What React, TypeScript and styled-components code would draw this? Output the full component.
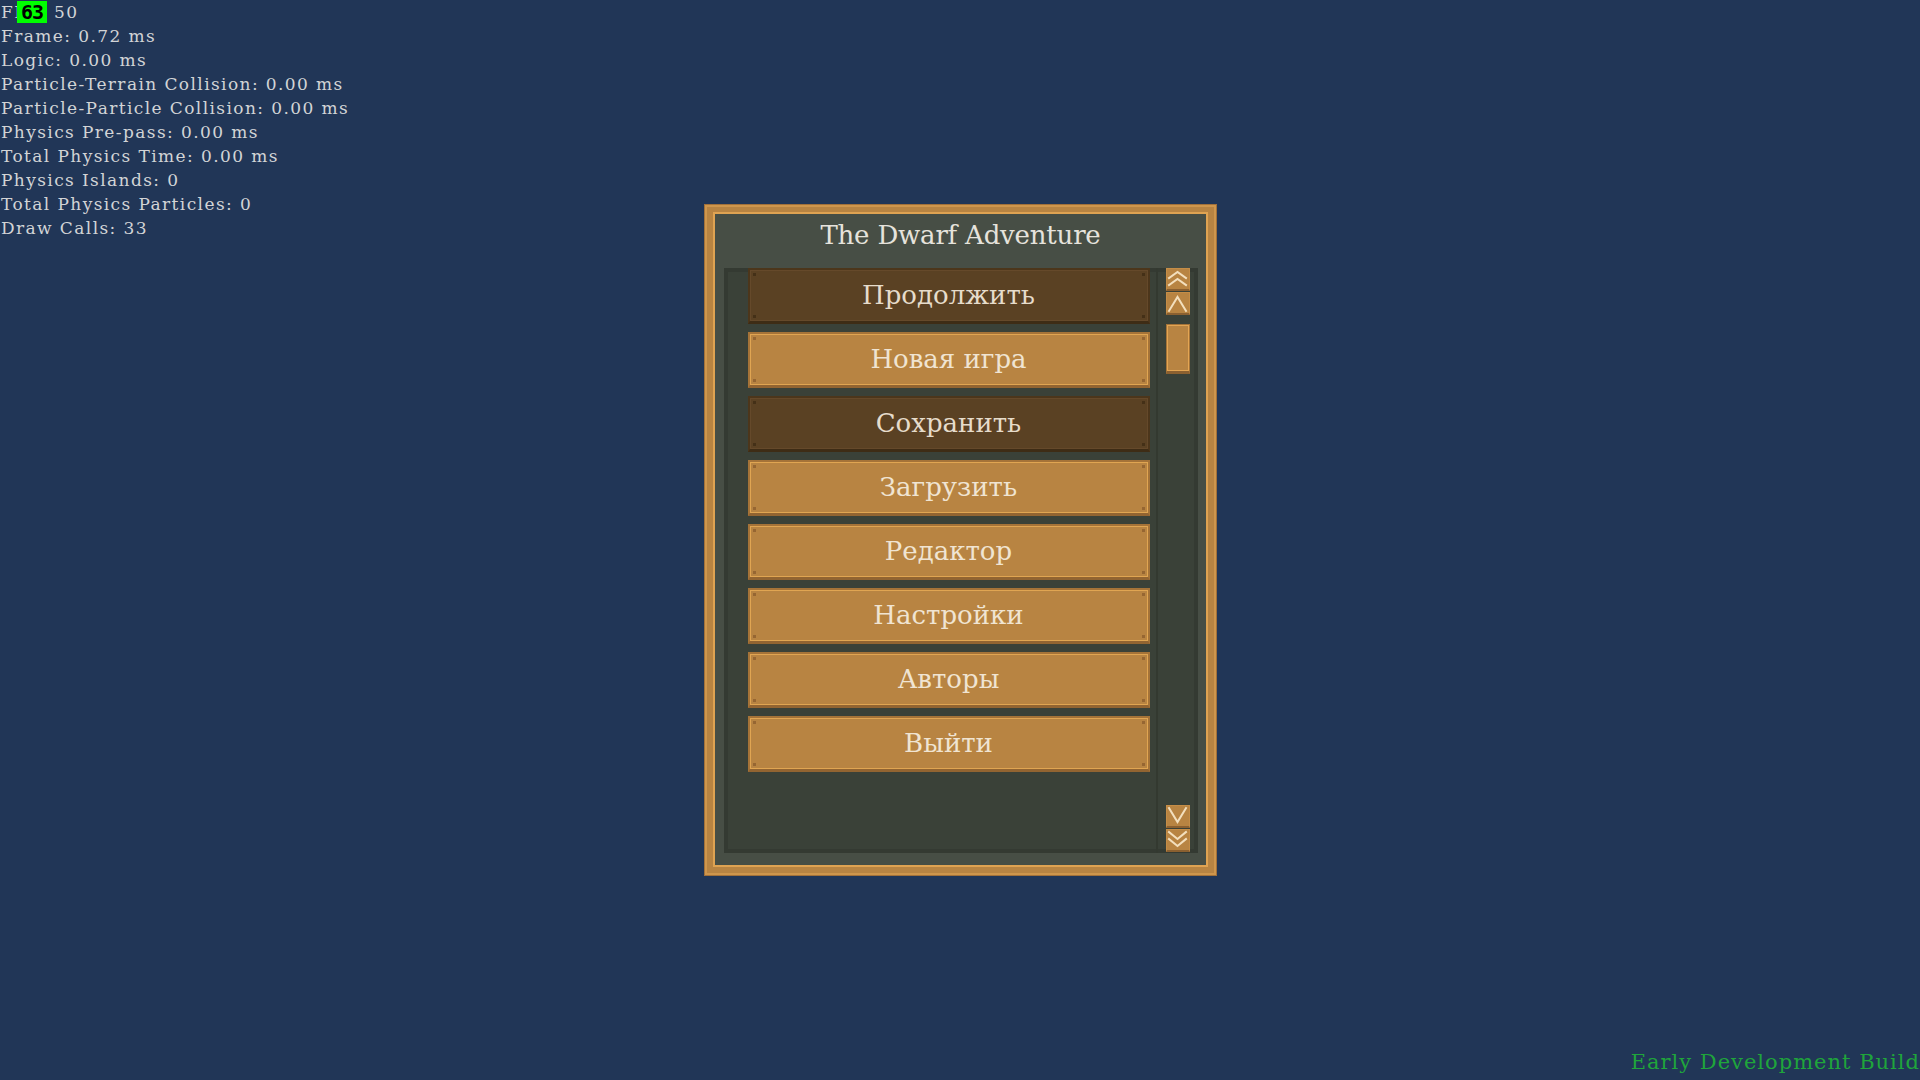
import React from "react";
import styled, { createGlobalStyle, css } from "styled-components";

const GlobalStyle = createGlobalStyle`
  html, body {
    margin: 0;
    padding: 0;
    background: #213657;
  }
  body {
    font-family: "DejaVu Serif", "Liberation Serif", serif;
  }
`;

const Screen = styled.div`
  position: relative;
  width: 100vw;
  height: 100vh;
  overflow: hidden;
  display: flex;
  align-items: center;
  justify-content: center;
  background: #213657;
`;

const Hud = styled.div`
  position: absolute;
  top: 0;
  left: 1px;
  display: flex;
  flex-direction: column;
  font-size: 17px;
  line-height: 24px;
  letter-spacing: 1.4px;
  color: #d2d4d6;
  white-space: nowrap;
`;

const HudLine = styled.div`
  position: relative;
`;

const FpsBadge = styled.span`
  position: absolute;
  left: 16px;
  top: 1px;
  width: 30px;
  height: 22px;
  background: #00ff00;
  color: #000;
  font-family: "DejaVu Sans Mono", monospace;
  font-weight: bold;
  font-size: 20px;
  line-height: 22px;
  text-align: center;
  letter-spacing: -1px;
`;

const BuildLabel = styled.div`
  position: absolute;
  right: 0;
  bottom: 4px;
  font-size: 21px;
  line-height: 28px;
  letter-spacing: 1px;
  color: #1fa53b;
  white-space: nowrap;
`;

const Frame = styled.div`
  box-sizing: border-box;
  width: 513px;
  height: 672px;
  display: flex;
  padding: 7px 8px 8px 8px;
  background: #b88442;
  border: 1px solid #a2713a;
  box-shadow: inset 0 0 0 2px #cf964c;
`;

const Panel = styled.div`
  flex: 1;
  display: flex;
  flex-direction: column;
  background: #474e45;
  border: 2px solid #dfa352;
  padding: 0 8px 12px 9px;
`;

const Title = styled.div`
  height: 42px;
  display: flex;
  align-items: center;
  justify-content: center;
  font-size: 26px;
  letter-spacing: -0.2px;
  color: #e6e3dc;
  white-space: nowrap;
`;

const Recess = styled.div`
  flex: 1;
  margin-top: 12px;
  display: grid;
  grid-template-columns: 432px 2px 1fr;
  background: #3a4138;
  box-shadow: inset 0 0 0 4px #343a32;
`;

const ButtonList = styled.div`
  display: flex;
  flex-direction: column;
  gap: 8px;
  padding-left: 24px;
`;

const rivets = (c: string) => css`
  background-image: linear-gradient(${c}, ${c}), linear-gradient(${c}, ${c}),
    linear-gradient(${c}, ${c}), linear-gradient(${c}, ${c});
  background-size: 3px 3px;
  background-repeat: no-repeat;
  background-position: left 3px top 3px, right 3px top 3px,
    left 3px bottom 3px, right 3px bottom 3px;
`;

const MenuButton = styled.div<{ $disabled?: boolean }>`
  box-sizing: border-box;
  width: 402px;
  height: 56px;
  display: flex;
  align-items: center;
  justify-content: center;
  font-size: 26px;
  padding-bottom: 1px;
  white-space: nowrap;
  ${({ $disabled }) =>
    $disabled
      ? css`
          background-color: #5a4123;
          border: 2px solid #4c361b;
          border-bottom: 3px solid #3e2c15;
          box-shadow: inset 0 0 0 1px #65492a;
          color: #e6dccb;
          ${rivets("#443017")}
        `
      : css`
          background-color: #b88442;
          border: 2px solid #a57338;
          border-bottom: 3px solid #926431;
          box-shadow: inset 0 0 0 1px #e0a552;
          color: #f0e4d2;
          ${rivets("#966632")}
        `}
`;

const Divider = styled.div`
  background: #333930;
`;

const ScrollColumn = styled.div`
  display: flex;
  flex-direction: column;
  padding: 0 8px;
`;

const ScrollButton = styled.div`
  box-sizing: border-box;
  width: 24px;
  height: 23px;
  margin-bottom: 1px;
  background: #b88442;
  border: 1px solid #c58d47;
  border-bottom: 2px solid #8b6030;
  display: flex;
`;

const Thumb = styled.div`
  box-sizing: border-box;
  width: 24px;
  height: 50px;
  margin-top: 8px;
  background: #b88442;
  border: 1px solid #a57439;
  border-bottom: 3px solid #8b6030;
  box-shadow: inset 0 0 0 1px #e3a553;
`;

const DownGroup = styled.div`
  margin-top: auto;
  display: flex;
  flex-direction: column;
`;

const Arrow = ({ lines }: { lines: string[] }) => (
  <svg width="22" height="20" viewBox="0 0 22 20">
    {lines.map((p, i) => (
      <polyline
        key={i}
        points={p}
        fill="none"
        stroke="#f3dfbd"
        strokeWidth={2}
        strokeLinecap="square"
        strokeLinejoin="miter"
      />
    ))}
  </svg>
);

const hudLines = [
  "Frame: 0.72 ms",
  "Logic: 0.00 ms",
  "Particle-Terrain Collision: 0.00 ms",
  "Particle-Particle Collision: 0.00 ms",
  "Physics Pre-pass: 0.00 ms",
  "Total Physics Time: 0.00 ms",
  "Physics Islands: 0",
  "Total Physics Particles: 0",
  "Draw Calls: 33",
];

const menu: { label: string; disabled?: boolean }[] = [
  { label: "Продолжить", disabled: true },
  { label: "Новая игра" },
  { label: "Сохранить", disabled: true },
  { label: "Загрузить" },
  { label: "Редактор" },
  { label: "Настройки" },
  { label: "Авторы" },
  { label: "Выйти" },
];

export default function App() {
  return (
    <>
      <GlobalStyle />
      <Screen>
        <Hud>
          <HudLine>
            FPS: 50
            <FpsBadge>63</FpsBadge>
          </HudLine>
          {hudLines.map((l) => (
            <HudLine key={l}>{l}</HudLine>
          ))}
        </Hud>

        <Frame>
          <Panel>
            <Title>The Dwarf Adventure</Title>
            <Recess>
              <ButtonList>
                {menu.map((m) => (
                  <MenuButton key={m.label} $disabled={m.disabled}>
                    {m.label}
                  </MenuButton>
                ))}
              </ButtonList>
              <Divider />
              <ScrollColumn>
                <ScrollButton>
                  <Arrow lines={["2,9 10.5,3 19,9", "2,16 10.5,10 19,16"]} />
                </ScrollButton>
                <ScrollButton>
                  <Arrow lines={["2,18 10.5,4 19,18"]} />
                </ScrollButton>
                <Thumb />
                <DownGroup>
                  <ScrollButton>
                    <Arrow lines={["2,2 10.5,16 19,2"]} />
                  </ScrollButton>
                  <ScrollButton>
                    <Arrow lines={["2,2 10.5,9 19,2", "2,9 10.5,16 19,9"]} />
                  </ScrollButton>
                </DownGroup>
              </ScrollColumn>
            </Recess>
          </Panel>
        </Frame>

        <BuildLabel>Early Development Build</BuildLabel>
      </Screen>
    </>
  );
}
